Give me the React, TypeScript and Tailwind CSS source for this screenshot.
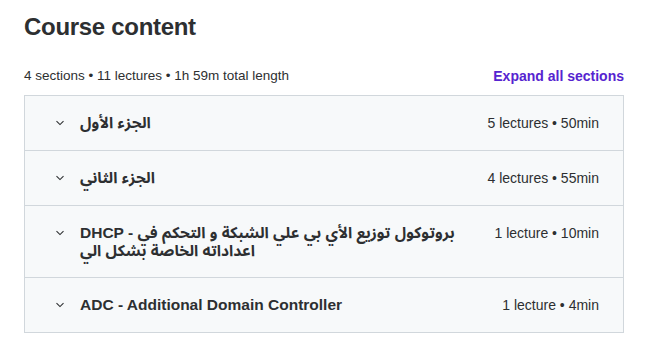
const sections = [
  { title: 'الجزء الأول', meta: '5 lectures • 50min' },
  { title: 'الجزء الثاني', meta: '4 lectures • 55min' },
  { title: 'DHCP - بروتوكول توزيع الأي بي علي الشبكة و التحكم في اعداداته الخاصة بشكل الي', meta: '1 lecture • 10min' },
  { title: 'ADC - Additional Domain Controller', meta: '1 lecture • 4min' },
];

function Chevron() {
  return (
    <svg width="10" height="6" viewBox="0 0 10 6" fill="none" className="mt-[7px] shrink-0">
      <path d="M1.5 1.2 L5 4.6 L8.5 1.2" stroke="#2d2f31" strokeWidth="1.1" />
    </svg>
  );
}

export default function App() {
  return (
    <div className="bg-white w-[647px] h-[354px] px-6 pt-[11px] text-[#2d2f31]" style={{ fontFamily: '"Liberation Sans", "Noto Sans Arabic", "Noto Naskh Arabic", "DejaVu Sans", sans-serif' }}>
      <h2 className="text-[24px] font-bold leading-[32px] tracking-[-0.3px]">Course content</h2>
      <div className="flex items-center justify-between mt-[23px] w-[600px]">
        <span className="text-[13.5px] leading-5">4 sections • 11 lectures • 1h 59m total length</span>
        <button type="button" className="text-[14px] font-bold text-[#5624d0] leading-5">Expand all sections</button>
      </div>
      <div className="mt-[9px] w-[600px] border border-[#d1d7dc]">
        {sections.map((s, i) => (
          <div key={i} className={`flex items-start bg-[#f7f9fa] pl-[30px] pr-[24px] py-[17px] ${i > 0 ? 'border-t border-[#d1d7dc]' : ''}`}>
            <Chevron />
            <div className="ml-[15px] w-[380px] text-[15.5px] font-bold leading-[18px] pt-[1px]">{s.title}</div>
            <div className="ml-auto text-[14px] leading-[20px] whitespace-nowrap">{s.meta}</div>
          </div>
        ))}
      </div>
    </div>
  );
}
